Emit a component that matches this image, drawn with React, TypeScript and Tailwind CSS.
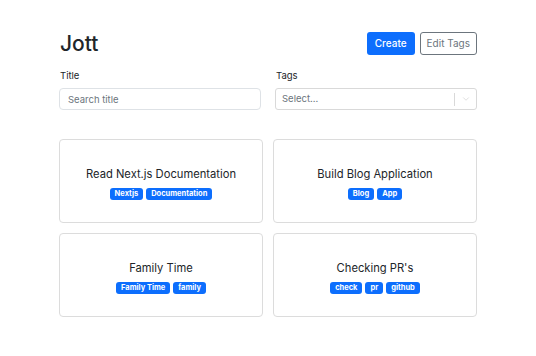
import { ChevronDown } from "lucide-react";

type Note = { title: string; tags: string[] };

const notes: Note[] = [
  { title: "Read Next.js Documentation", tags: ["Nextjs", "Documentation"] },
  { title: "Build Blog Application", tags: ["Blog", "App"] },
  { title: "Family Time", tags: ["Family Time", "family"] },
  { title: "Checking PR's", tags: ["check", "pr", "github"] },
];

function NoteCard({ note }: { note: Note }) {
  return (
    <div className="h-[84px] pt-[4px] flex flex-col items-center justify-center gap-[6px] border border-[#dcdcdc] rounded-[4px] bg-white">
      <div className="text-[11.2px] leading-[15px] text-[#212529]">{note.title}</div>
      <div className="flex gap-[3px]">
        {note.tags.map((t) => (
          <span
            key={t}
            className="px-[5px] h-[12px] leading-[12px] rounded-[3px] bg-[#0d6efd] text-white text-[7.5px] font-bold"
          >
            {t}
          </span>
        ))}
      </div>
    </div>
  );
}

export default function App() {
  return (
    <div className="w-[536px] h-[356px] bg-white font-['Inter',sans-serif] text-[#212529]">
      <div className="w-[418px] ml-[59px] pt-[32px]">
        <div className="flex items-center justify-between">
          <h1 className="text-[21px] font-medium leading-[23px] pl-[1px]">Jott</h1>
          <div className="flex gap-[5px]">
            <button className="h-[23px] px-[8px] rounded-[3px] bg-[#0d6efd] text-white text-[10px] font-medium">
              Create
            </button>
            <button className="h-[23px] px-[6px] rounded-[3px] border border-[#6c757d] text-[#6c757d] text-[10px]">
              Edit Tags
            </button>
          </div>
        </div>

        <div className="grid grid-cols-2 gap-[14px] mt-[15px]">
          <div>
            <label className="block text-[9.5px] leading-[12px] mb-[6px] pl-[1px]">Title</label>
            <input
              placeholder="Search title"
              className="block w-full h-[22px] px-[8px] text-[9.5px] border border-[#dee2e6] rounded-[4px] outline-none placeholder:text-[#6c757d]"
            />
          </div>
          <div>
            <label className="block text-[9.5px] leading-[12px] mb-[6px] pl-[1px]">Tags</label>
            <div className="h-[22px] flex items-center border border-[#d9d9d9] rounded-[3px]">
              <span className="flex-1 px-[6px] text-[9.5px] text-[#6c757d]">Select...</span>
              <span className="w-px h-[13px] bg-[#d9d9d9]" />
              <span className="w-[21px] flex items-center justify-center text-[#cccccc]">
                <ChevronDown size={10} strokeWidth={1.5} />
              </span>
            </div>
          </div>
        </div>

        <div className="grid grid-cols-2 gap-x-[10px] gap-y-[10px] mt-[29px]">
          {notes.map((n) => (
            <NoteCard key={n.title} note={n} />
          ))}
        </div>
      </div>
    </div>
  );
}
